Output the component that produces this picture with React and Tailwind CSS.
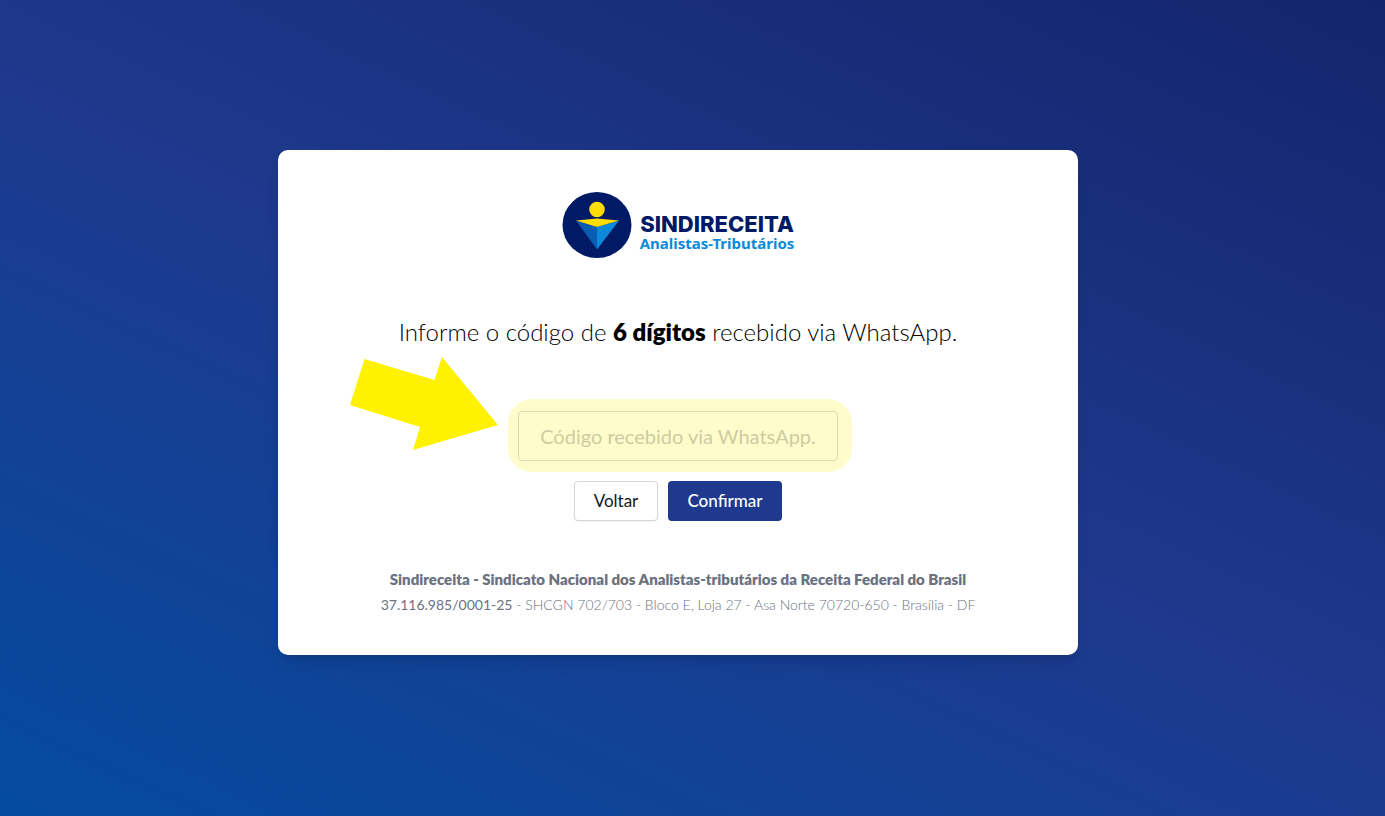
import { useState } from 'react';

/**
 * Logo: round mark plus the two-line name.
 */
function Logo() {
  return (
    <div className="flex items-center justify-center gap-2">
      <svg className="h-[68px] w-[70px]" viewBox="0 0 70 68" aria-hidden="true">
        <ellipse cx="35" cy="34" rx="34.5" ry="33" fill="#001a66" />
        <circle cx="35" cy="18.5" r="7.8" fill="#ffdd00" />
        <path d="M14 29.5 L35 36 V58.5 Z" fill="#0a5cb0" />
        <path d="M57 29.5 L35 36 V58.5 Z" fill="#0a8ad8" />
        <path d="M14 29.5 L35 27.5 L57 29.5 L35 36 Z" fill="#ffdd00" />
      </svg>
      <div className="flex flex-col pt-4 whitespace-nowrap">
        <span className="font-['Inter'] text-[22px] leading-5 font-extrabold text-[#001a66]">
          SINDIRECEITA
        </span>
        <span className="font-['Noto_Sans'] text-[15px] leading-[18px] font-bold text-[#0a8ad8]">
          Analistas-Tributários
        </span>
      </div>
    </div>
  );
}

export default function App() {
  const [code, setCode] = useState('');

  return (
    <main className="flex min-h-screen items-center justify-center bg-[linear-gradient(25deg,#044ba0,#1e398d_50%,#13256c)] pr-[29px] pb-[11px] font-['Lato',sans-serif]">
      <section className="w-full max-w-[800px] rounded-[10px] bg-white px-10 pt-[41px] pb-[38px] text-center shadow-lg">
        <Logo />

        <form onSubmit={(e) => e.preventDefault()}>
          <label htmlFor="code" className="mt-[53px] block text-2xl leading-10 font-light text-black">
            Informe o código de <strong className="font-extrabold">6 dígitos</strong> recebido via WhatsApp.
          </label>

          {/* Code field with its highlight and pointer */}
          <div className="relative mx-auto mt-[59px] w-80">
            <input
              id="code"
              type="text"
              value={code}
              onChange={(e) => setCode(e.target.value)}
              placeholder="Código recebido via WhatsApp."
              className="block h-[50px] w-full rounded border border-gray-300 bg-white text-center text-xl placeholder:text-[#bfc3ca]"
            />
            <div className="pointer-events-none absolute -top-3 -right-[14px] -bottom-[11px] -left-[10px] rounded-3xl bg-[#fff200]/20" />
            <svg
              className="pointer-events-none absolute -top-[54px] right-full mr-5 h-[94px] w-[148px]"
              viewBox="0 0 148 94"
              aria-hidden="true"
            >
              <path d="M14.5 2 L84.5 23 L92 0 L148 68 L63 93 L70 70 L0 48 Z" fill="#fff200" />
            </svg>
          </div>

          <div className="mt-5 flex justify-center gap-[10px]">
            <button
              type="button"
              className="h-10 w-[84px] rounded border border-gray-300 bg-white text-[17px] text-gray-900 shadow-xs"
            >
              Voltar
            </button>
            <button type="submit" className="h-10 w-[114px] rounded bg-[#1e398d] text-[17px] font-medium text-white">
              Confirmar
            </button>
          </div>
        </form>

        <footer className="mt-[46px] leading-[25px] text-gray-500">
          <p className="text-[15px] font-extrabold">
            Sindireceita - Sindicato Nacional dos Analistas-tributários da Receita Federal do Brasil
          </p>
          <p className="text-sm leading-[25px] font-light">
            <span className="font-normal">37.116.985/0001-25</span> - SHCGN 702/703 - Bloco E, Loja 27 - Asa Norte
            70720-650 - Brasília - DF
          </p>
        </footer>
      </section>
    </main>
  );
}
